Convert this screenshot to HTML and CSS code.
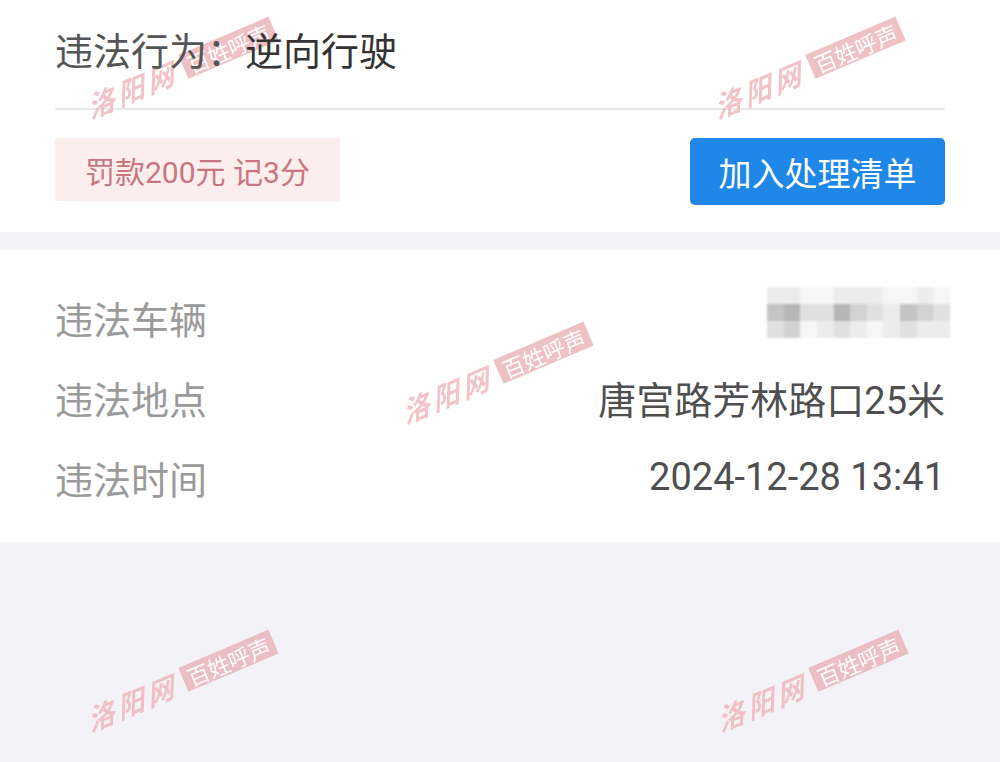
FILE: index.html
```html
<!DOCTYPE html>
<html lang="zh-CN">
<head>
<meta charset="utf-8">
<title>违法详情</title>
<link rel="stylesheet" href="styles.css">
</head>
<body>
<div class="page">
  <section class="card card-top">
    <div class="title"><span class="t-label">违法行为：</span><span class="t-value">逆向行驶</span></div>
    <div class="divider"></div>
    <div class="actions">
      <div class="penalty">罚款200元 记3分</div>
      <button class="btn">加入处理清单</button>
    </div>
  </section>

  <section class="card card-info">
    <div class="row">
      <span class="label">违法车辆</span>
      <span class="plate" aria-label="车牌已打码">
        <i class="g1"></i><i class="g1"></i><i class="g0"></i><i class="g0"></i><i class="g1"></i><i class="g1"></i><i class="g1"></i><i class="g0"></i><i class="g0"></i><i class="g1"></i><i class="g0"></i>
        <i class="g4"></i><i class="g5"></i><i class="g2"></i><i class="g2"></i><i class="g5"></i><i class="g3"></i><i class="g2"></i><i class="g1"></i><i class="g4"></i><i class="g3"></i><i class="g2"></i>
        <i class="g2"></i><i class="g3"></i><i class="g0"></i><i class="g1"></i><i class="g2"></i><i class="g1"></i><i class="g0"></i><i class="g1"></i><i class="g2"></i><i class="g1"></i><i class="g1"></i>
      </span>
    </div>
    <div class="row">
      <span class="label">违法地点</span>
      <span class="value">唐宫路芳林路口25米</span>
    </div>
    <div class="row">
      <span class="label">违法时间</span>
      <span class="value">2024-12-28 13:41</span>
    </div>
  </section>

  <div class="watermarks" aria-hidden="true">
    <div class="wm wm-1"><span class="wm-script">洛阳网</span><span class="wm-box">百姓呼声</span></div>
    <div class="wm wm-2"><span class="wm-script">洛阳网</span><span class="wm-box">百姓呼声</span></div>
    <div class="wm wm-3"><span class="wm-script">洛阳网</span><span class="wm-box">百姓呼声</span></div>
    <div class="wm wm-4"><span class="wm-script">洛阳网</span><span class="wm-box">百姓呼声</span></div>
    <div class="wm wm-5"><span class="wm-script">洛阳网</span><span class="wm-box">百姓呼声</span></div>
  </div>
</div>
</body>
</html>
```

FILE: styles.css
```css
* { box-sizing: border-box; }

html, body {
  margin: 0;
  padding: 0;
}

body {
  width: 1000px;
  height: 762px;
  overflow: hidden;
  background: #f3f3f7;
  font-family: Roboto, "Noto Sans CJK SC", sans-serif;
}

.page {
  position: relative;
  width: 1000px;
  height: 762px;
}

.card {
  background: #ffffff;
  padding: 0 55px;
}

/* ---------- top card ---------- */
.title {
  position: relative;
  z-index: 2;
  font-size: 38px;
  line-height: 104px;
  margin-bottom: 4px;
  white-space: nowrap;
}
.t-label { color: #555555; }
.t-value { color: #333333; }

.divider {
  height: 2px;
  background: #e8e8eb;
}

.actions {
  display: flex;
  justify-content: space-between;
  align-items: flex-start;
  padding: 28px 0 27px;
}

.penalty {
  display: flex;
  align-items: center;
  height: 63px;
  padding: 0 30px;
  background: #fdeeee;
  color: #c87780;
  font-size: 30px;
  white-space: nowrap;
}

.btn {
  width: 255px;
  height: 67px;
  border: none;
  border-radius: 5px;
  background: #1f87e8;
  color: #ffffff;
  font-family: inherit;
  font-size: 33px;
  padding: 0;
  cursor: pointer;
}

/* ---------- info card ---------- */
.card-info {
  margin-top: 18px;
  padding-top: 27px;
  padding-bottom: 25px;
}

.row {
  display: flex;
  justify-content: space-between;
  align-items: center;
  height: 80px;
  font-size: 38px;
}

.label { color: #9a9a9a; }
.value { color: #4f4f4f; white-space: nowrap; }

.plate {
  display: grid;
  grid-template-columns: repeat(11, 1fr);
  grid-template-rows: repeat(3, 1fr);
  width: 183px;
  height: 51px;
  margin-right: -5px;
  margin-top: -10px;
  filter: blur(1px);
}
.plate i { display: block; }
.plate .g0 { background: #f6f6f6; }
.plate .g1 { background: #ececec; }
.plate .g2 { background: #e0e0e0; }
.plate .g3 { background: #d2d2d2; }
.plate .g4 { background: #c4c4c4; }
.plate .g5 { background: #b6b6b6; }

/* ---------- watermarks ---------- */
.watermarks {
  position: absolute;
  inset: 0;
  z-index: 1;
  pointer-events: none;
}

.wm {
  position: absolute;
  display: flex;
  align-items: flex-end;
  gap: 8px;
  height: 32px;
  transform-origin: 0 100%;
  transform: rotate(-23deg);
  opacity: 0.78;
  white-space: nowrap;
}

.wm-script {
  font-family: "Liberation Serif", "Noto Sans CJK SC", serif;
  font-style: italic;
  font-weight: bold;
  font-size: 28px;
  line-height: 32px;
  letter-spacing: 4px;
  color: #efb3b9;
  transform: skewX(-12deg);
}

.wm-box {
  background: #eab0b5;
  color: #ffffff;
  font-family: "Noto Sans CJK SC", serif;
  font-size: 22px;
  line-height: 26px;
  padding: 0 5px;
  margin-bottom: 6px;
}

.wm-1 { left: 95px;  top: 93px; }
.wm-2 { left: 722px; top: 93px; }
.wm-3 { left: 410px; top: 398px; }
.wm-4 { left: 95px;  top: 706px; }
.wm-5 { left: 725px; top: 706px; }
```
